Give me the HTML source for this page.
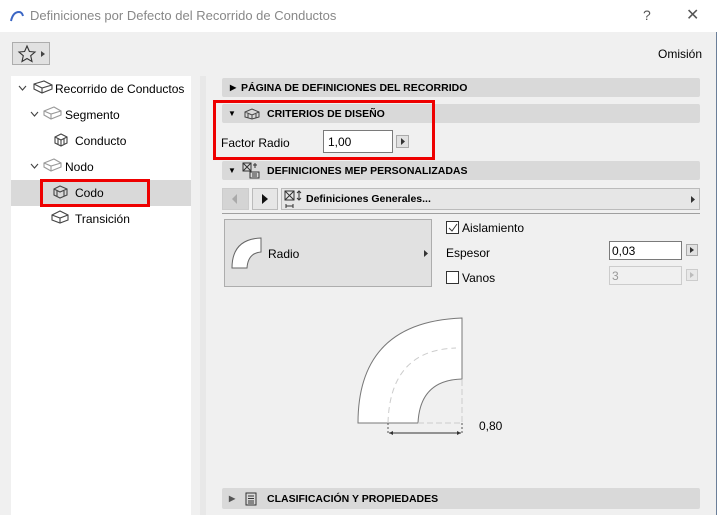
<!DOCTYPE html>
<html><head><meta charset="utf-8"><style>
*{margin:0;padding:0;box-sizing:border-box}
body{width:717px;height:515px;background:#f0f0f0;font-family:"Liberation Sans",sans-serif;font-size:12px;color:#000;position:relative;overflow:hidden;border-right:1px solid #6b7f99}
.a{position:absolute}
.t{white-space:nowrap}
.hdr{position:absolute;left:222px;width:478px;height:19px;background:#d9d9d9;border-radius:2px;font-weight:bold;font-size:10.5px;line-height:19px}
</style></head><body>
<div class="a" style="left:0;top:0;width:717px;height:32px;background:#fff"></div>
<svg class="a" style="left:9px;top:9px" width="16" height="14"><path d="M2 12 Q4 3 10 3 Q13 3 14 7" fill="none" stroke="#3b66c4" stroke-width="2"/></svg>
<div class="a t" style="left:30px;top:8px;font-size:13px;color:#888">Definiciones por Defecto del Recorrido de Conductos</div>
<div class="a t" style="left:643px;top:7px;font-size:14px;color:#555">?</div>
<div class="a t" style="left:686px;top:5px;font-size:16px;color:#555">✕</div>

<div class="a" style="left:12px;top:42px;width:38px;height:23px;border:1px solid #adadad;background:#e1e1e1"></div>
<svg class="a" style="left:17px;top:44px" width="32" height="20"><path d="M10 2 L12.4 7.5 L18 8 L13.7 11.7 L15 17.5 L10 14.5 L5 17.5 L6.3 11.7 L2 8 L7.6 7.5Z" fill="none" stroke="#333" stroke-width="1.1"/><path d="M24 7 L28 10 L24 13Z" fill="#444"/></svg>
<div class="a t" style="left:658px;top:47px">Omisión</div>

<div class="a" style="left:11px;top:76px;width:180px;height:439px;background:#fff"></div>
<div class="a" style="left:200px;top:76px;width:6px;height:439px;background:#e8e8e8"></div>
<div class="a" style="left:11px;top:180px;width:180px;height:26px;background:#d9d9d9"></div>
<div class="a" style="left:40px;top:179px;width:110px;height:28px;border:3px solid #e00"></div>
<svg class="a" style="left:0;top:76px" width="191" height="160" fill="none" stroke="#444" stroke-width="1.1">
<path d="M19 10 L22.5 14 L26 10"/>
<path d="M34 8 L44 5 L52 9 L52 13 L42 17 L34 13Z M34 8 L42 12 L52 9 M42 12 L42 17"/>
<path d="M31 36 L34.5 40 L38 36"/>
<path d="M44 35 L54 31 L61 35 L61 39 L51 43 L44 39Z M44 35 L51 38 L61 35 M51 38 L51 43" stroke="#999"/>
<path d="M55 61 L61 58 L67 61 L67 67 L61 70 L55 67Z M55 61 L61 64 L67 61 M61 64 L61 70 M58 62 L58 68 M64 62 L64 68"/>
<path d="M31 88 L34.5 92 L38 88"/>
<path d="M44 87 L54 83 L61 87 L61 91 L51 95 L44 91Z M44 87 L51 90 L61 87 M51 90 L51 95" stroke="#999"/>
<path d="M54 113 L60 110 L67 113 L67 119 L60 122 L54 119Z M54 113 L60 116 L67 113 M57 115 L57 120 M64 115 L64 120"/>
<path d="M52 139 L60 135 L68 139 L68 144 L60 147 L52 144Z M52 139 L60 142 L68 139 M60 142 L60 147"/>
</svg>
<div class="a t" style="left:55px;top:82px">Recorrido de Conductos</div>
<div class="a t" style="left:65px;top:108px">Segmento</div>
<div class="a t" style="left:75px;top:134px">Conducto</div>
<div class="a t" style="left:65px;top:160px">Nodo</div>
<div class="a t" style="left:75px;top:186px">Codo</div>
<div class="a t" style="left:75px;top:212px">Transición</div>

<div class="hdr" style="top:78px"><span style="position:absolute;left:8px;font-size:8px">▶</span><span style="position:absolute;left:19px;top:1px">PÁGINA DE DEFINICIONES DEL RECORRIDO</span></div>
<div class="hdr" style="top:104px"><span style="position:absolute;left:6px;font-size:8px">▼</span>
<svg style="position:absolute;left:21px;top:3px" width="18" height="13" fill="none" stroke="#444"><path d="M2 5 L9 2 L16 5 L16 10 L9 12 L2 10Z M2 5 L9 8 L16 5 M9 8 L9 12 M5 7 L5 11 M13 7 L13 11"/></svg>
<span style="position:absolute;left:45px;top:1px">CRITERIOS DE DISEÑO</span></div>
<div class="a t" style="left:221px;top:136px">Factor Radio</div>
<div class="a" style="left:323px;top:130px;width:70px;height:23px;background:#fff;border:1px solid #7a7a7a;padding:4px 4px;font-size:12px">1,00</div>
<div class="a" style="left:396px;top:135px;width:13px;height:13px;border:1px solid #aaa;background:#e1e1e1"></div>
<svg class="a" style="left:399px;top:137px" width="8" height="9"><path d="M2 1 L6 4.5 L2 8Z" fill="#333"/></svg>
<div class="a" style="left:213px;top:100px;width:222px;height:60px;border:3px solid #e00"></div>

<div class="hdr" style="top:161px"><span style="position:absolute;left:6px;font-size:8px">▼</span>
<svg style="position:absolute;left:19px;top:0" width="20" height="19" fill="none" stroke="#333"><rect x="2" y="2" width="8" height="8"/><path d="M2 2 L10 10 M10 2 L2 10 M14 2 L14 7 M12 4 L16 4"/><rect x="9" y="11" width="9" height="6"/><path d="M11 13 L16 13 M11 15 L16 15"/></svg>
<span style="position:absolute;left:45px;top:1px">DEFINICIONES MEP PERSONALIZADAS</span></div>

<div class="a" style="left:222px;top:188px;width:27px;height:22px;background:#d4d4d4;border:1px solid #ccc"></div>
<svg class="a" style="left:231px;top:193px" width="8" height="12"><path d="M6 1 L1 6 L6 11Z" fill="#aaa"/></svg>
<div class="a" style="left:252px;top:188px;width:26px;height:22px;background:#e6e6e6;border:1px solid #bbb"></div>
<svg class="a" style="left:261px;top:193px" width="8" height="12"><path d="M1 1 L7 6 L1 11Z" fill="#111"/></svg>
<div class="a" style="left:281px;top:188px;width:419px;height:22px;background:#e6e6e6;border:1px solid #bbb"></div>
<svg class="a" style="left:283px;top:189px" width="20" height="20" fill="none" stroke="#333"><rect x="2" y="2" width="9" height="9"/><path d="M2 2 L11 11 M11 2 L2 11 M16 2 L16 11 M14 4 L16 2 L18 4 M14 9 L16 11 L18 9 M3 17 L10 17 M3 15 L3 19 M10 15 L10 19"/></svg>
<div class="a t" style="left:306px;top:193px;font-weight:bold;font-size:10.5px">Definiciones Generales...</div>
<svg class="a" style="left:690px;top:195px" width="6" height="9"><path d="M1 1 L5 4.5 L1 8Z" fill="#333"/></svg>
<div class="a" style="left:222px;top:213px;width:478px;height:1px;background:#a0a0a0"></div>

<div class="a" style="left:224px;top:219px;width:208px;height:68px;background:#e1e1e1;border:1px solid #adadad"></div>
<svg class="a" style="left:230px;top:236px" width="34" height="34"><path d="M2 32 Q2 3 31 2 L31 16 Q18 17 17 32Z" fill="#fff" stroke="#666"/></svg>
<div class="a t" style="left:268px;top:247px">Radio</div>
<svg class="a" style="left:423px;top:249px" width="6" height="9"><path d="M1 1 L5 4.5 L1 8Z" fill="#333"/></svg>

<div class="a" style="left:446px;top:221px;width:13px;height:13px;border:1px solid #333;background:#fff"></div>
<svg class="a" style="left:447px;top:222px" width="12" height="12"><path d="M2 6 L5 9 L10 2" fill="none" stroke="#333"/></svg>
<div class="a t" style="left:462px;top:221px">Aislamiento</div>
<div class="a t" style="left:446px;top:246px">Espesor</div>
<div class="a" style="left:609px;top:241px;width:73px;height:19px;background:#fff;border:1px solid #7a7a7a;padding:2px 2px;font-size:12px">0,03</div>
<div class="a" style="left:686px;top:244px;width:12px;height:12px;border:1px solid #aaa;background:#e1e1e1"></div>
<svg class="a" style="left:689px;top:246px" width="6" height="8"><path d="M1 1 L5 4 L1 7Z" fill="#333"/></svg>
<div class="a" style="left:446px;top:271px;width:13px;height:13px;border:1px solid #333;background:#fff"></div>
<div class="a t" style="left:462px;top:271px">Vanos</div>
<div class="a" style="left:609px;top:266px;width:73px;height:19px;background:#f0f0f0;border:1px solid #ccc;padding:2px 2px;font-size:12px;color:#999">3</div>
<div class="a" style="left:686px;top:269px;width:12px;height:12px;border:1px solid #ccc;background:#e8e8e8"></div>
<svg class="a" style="left:689px;top:271px" width="6" height="8"><path d="M1 1 L5 4 L1 7Z" fill="#bbb"/></svg>

<svg class="a" style="left:340px;top:300px" width="180" height="150">
<path d="M18 123 Q18 22 122 18 L122 79 Q80 80 78 123Z" fill="#fff" stroke="#777" stroke-width="1"/>
<path d="M48 123 Q50 50 116 48" fill="none" stroke="#ccc" stroke-dasharray="6,4"/>
<path d="M78 123 L122 123 L122 79" fill="none" stroke="#ccc" stroke-dasharray="6,3"/>
<path d="M48 123 L48 133 M122 123 L122 133" stroke="#555" stroke-dasharray="2,2"/>
<path d="M49 133 L121 133" stroke="#333"/>
<path d="M49 133 L53 131 L53 135Z M121 133 L117 131 L117 135Z" fill="#333"/>
</svg>
<div class="a t" style="left:479px;top:419px">0,80</div>

<div class="hdr" style="top:488px;height:21px;line-height:21px"><span style="position:absolute;left:7px;font-size:8px;color:#555">▶</span>
<svg style="position:absolute;left:23px;top:4px" width="12" height="14" fill="none" stroke="#333"><rect x="1" y="1" width="10" height="12"/><path d="M3 4 L9 4 M3 6.5 L9 6.5 M3 9 L9 9 M3 11 L9 11"/></svg>
<span style="position:absolute;left:45px;top:1px">CLASIFICACIÓN Y PROPIEDADES</span></div>
</body></html>
